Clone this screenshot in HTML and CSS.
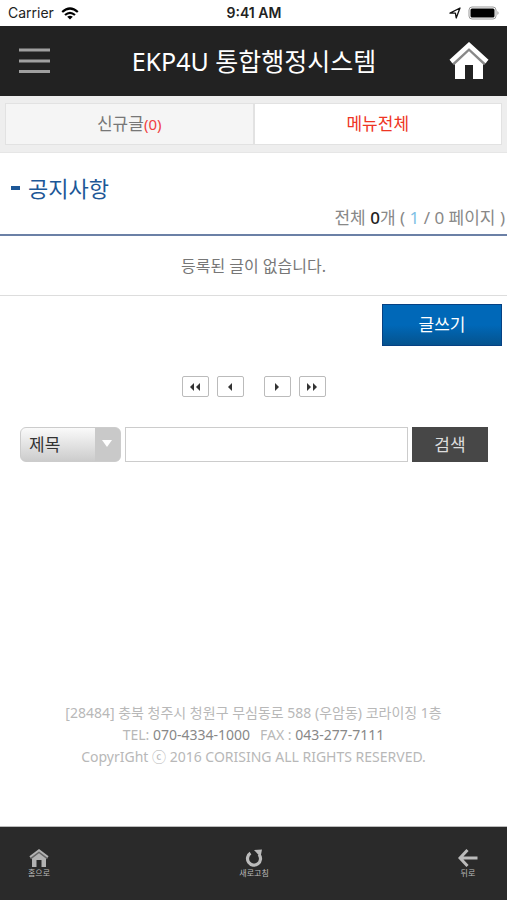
FILE: index.html
```html
<!DOCTYPE html>
<html lang="ko">
<head>
<meta charset="utf-8">
<meta name="viewport" content="width=device-width, initial-scale=1">
<title>EKP4U 통합행정시스템</title>
<link rel="stylesheet" href="styles.css">
</head>
<body>
<div class="status">
  <div class="status-side">
    <span>Carrier</span>
    <svg width="18" height="13" viewBox="0 0 18 13" aria-hidden="true"><g fill="none" stroke="#000" stroke-width="2.2"><path d="M1.2 5Q9-2 16.8 5"/><path d="M4 8Q9 3.600 14 8"/></g><path d="M9 12.500L6.200 9.800Q9 7.800 11.800 9.800Z"/></svg>
  </div>
  <span class="clock">9:41 AM</span>
  <div class="status-side status-end">
    <svg width="12" height="12" viewBox="0 0 12 12" aria-hidden="true"><path d="M1 6.200L11 1L7.200 11L6.400 6.200Z" fill="none" stroke="#111" stroke-width="1.300" stroke-linejoin="round"/></svg>
    <svg width="32" height="14" viewBox="0 0 32 14" aria-hidden="true"><rect x="1" y="1" width="27" height="12" rx="3" fill="#fff" stroke="#999"/><rect x="2.500" y="2.500" width="24" height="9" rx="1.500"/><path d="M29.500 5Q31.500 7 29.500 9Z" fill="#888"/></svg>
  </div>
</div>
<header class="header">
  <button class="icon-btn" type="button" aria-label="메뉴"><svg width="31" height="26" viewBox="0 0 31 26"><path d="M0 2h31M0 13h31M0 23.500h31" stroke="#a0a0a0" stroke-width="3"/></svg></button>
  <h1 class="title">EKP4U 통합행정시스템</h1>
  <a class="icon-btn home" href="#" aria-label="홈"><svg width="40" height="38" viewBox="0 0 40 38"><path d="M6 19L20 6L34 19V37H24V23H16V37H6Z" fill="#fff"/><path d="M3.500 21.500L20 6L36.500 21.500" fill="none" stroke="#888" stroke-width="4.500"/><path d="M2 19.500L20 3L38 19.500" fill="none" stroke="#fff" stroke-width="4.500"/></svg></a>
</header>
<nav class="tabs">
  <a class="tab" href="#">신규글<span class="count">(0)</span></a>
  <a class="tab tab-active" href="#">메뉴전체</a>
</nav>
<main class="main">
  <h2 class="heading"><span class="dash"></span>공지사항</h2>
  <p class="summary">전체 <b class="total">0</b>개 ( <span class="page">1</span> / 0 페이지 )</p>
  <p class="empty">등록된 글이 없습니다.</p>
  <div class="actions"><button class="write" type="button">글쓰기</button></div>
  <div class="pager">
    <button class="page-btn" type="button" aria-label="처음"><svg width="12" height="8" viewBox="0 0 12 8"><path d="M5 0V8L1 4ZM11 0V8L7 4Z"/></svg></button>
    <button class="page-btn page-prev" type="button" aria-label="이전"><svg width="12" height="8" viewBox="0 0 12 8"><path d="M8 0V8L4 4Z"/></svg></button>
    <button class="page-btn" type="button" aria-label="다음"><svg width="12" height="8" viewBox="0 0 12 8"><path d="M4 0V8L8 4Z"/></svg></button>
    <button class="page-btn" type="button" aria-label="마지막"><svg width="12" height="8" viewBox="0 0 12 8"><path d="M1 0V8L5 4ZM7 0V8L11 4Z"/></svg></button>
  </div>
  <form class="search">
    <div class="select-box">
      <select class="select" aria-label="검색 항목"><option>제목</option></select>
      <svg class="arrow" width="10" height="7" viewBox="0 0 10 7" aria-hidden="true"><path d="M0 0H10L5 7Z" fill="#fff"/></svg>
    </div>
    <input class="field" type="text" aria-label="검색어">
    <button class="submit" type="button">검색</button>
  </form>
</main>
<footer class="footer">
  <p>[28484] 충북 청주시 청원구 무심동로 588 (우암동) 코라이징 1층</p>
  <p class="contact"><span>TEL: <a href="tel:070-4334-1000">070-4334-1000</a></span><span>FAX : <a href="tel:043-277-7111">043-277-7111</a></span></p>
  <p>CopyrIGht ⓒ 2016 CORISING ALL RIGHTS RESERVED.</p>
</footer>
<nav class="toolbar">
  <a class="tool" href="#"><svg width="20" height="18" viewBox="0 0 20 18"><path d="M3 8.500L10 3L17 8.500V18H12.500V11H7.500V18H3Z" fill="#b2b2b2"/><path d="M1.500 9.500L10 3L18.500 9.500" fill="none" stroke="#666" stroke-width="2"/><path d="M1 8L10 1.300L19 8" fill="none" stroke="#b2b2b2" stroke-width="2"/></svg>홈으로</a>
  <a class="tool" href="#"><svg width="18" height="18" viewBox="0 0 18 18"><path d="M5.500 4.200A6.500 6.500 0 1 0 14 5.500" fill="none" stroke="#bbb" stroke-width="3.200"/><path d="M9 1L17 .5L15.500 8Z" fill="#bbb"/></svg>새로고침</a>
  <a class="tool" href="#"><svg width="20" height="18" viewBox="0 0 20 18"><path d="M9.500 1L2 9L9.500 17M2.500 9H19.500" fill="none" stroke="#bbb" stroke-width="3"/></svg>뒤로</a>
</nav>
</body>
</html>
```

FILE: styles.css
```css
* { box-sizing: border-box; }

body {
  margin: 0;
  min-height: 100vh;
  display: flex;
  flex-direction: column;
  background: #fff;
  color: #777;
  font: 17px/24px "Noto Sans", "Noto Sans CJK KR", sans-serif;
}

h1, h2, p { margin: 0; font-weight: 400; }
a { color: inherit; text-decoration: none; }
button, input, select { font: inherit; margin: 0; }
button { padding: 0; cursor: pointer; }
svg { display: block; flex: none; }

.status {
  display: grid;
  grid-template-columns: 1fr auto 1fr;
  align-items: center;
  height: 26px;
  padding: 0 7px 0 8px;
  color: #222;
  font: 14px/16px Inter, sans-serif;
}
.status-side { display: flex; align-items: center; gap: 7px; }
.status-end { justify-content: flex-end; }
.clock { font-weight: 600; }

.header {
  display: grid;
  grid-template-columns: 1fr auto 1fr;
  align-items: center;
  height: 70px;
  padding: 0 18px 0 19px;
  background: #222;
}
.icon-btn { display: block; justify-self: start; border: 0; background: none; }
.home { justify-self: end; }
.title { color: #fff; font-size: 25px; line-height: 36px; }

.tabs {
  display: flex;
  padding: 7px 5px;
  background: #eee;
  border-bottom: 1px solid #e6e6e6;
}
.tab {
  flex: 1;
  padding: 8px 0;
  border: 1px solid #e2e2e2;
  background: #f5f5f5;
  text-align: center;
}
.tab-active { background: #fff; color: #ee3524; }
.count { color: #f04040; font-size: 15px; }

.main { flex: 1; }
.heading {
  display: flex;
  align-items: center;
  gap: 8px;
  padding: 20px 11px 3px;
  color: #1d5797;
  font-size: 22px;
  line-height: 30px;
}
.dash { width: 9px; height: 4px; background: #1d5797; }
.summary {
  padding: 0 2px 4px;
  border-bottom: 2px solid #6b80a6;
  text-align: right;
  color: #888;
}
.total { color: #222; font-weight: 500; }
.page { color: #80bfe5; }
.empty {
  padding: 18px 0 17px;
  border-bottom: 1px solid #ddd;
  text-align: center;
  font-size: 16px;
}
.actions { display: flex; justify-content: flex-end; padding: 8px 5px 0; }
.write {
  width: 120px;
  height: 42px;
  border: 1px solid #064183;
  background: linear-gradient(#0068b8 50%, #05538e);
  color: #fff;
}

.pager { display: flex; justify-content: center; gap: 8px; padding: 30px 0; }
.page-btn {
  display: flex;
  align-items: center;
  justify-content: center;
  width: 27px;
  height: 21px;
  border: 1px solid #bbb;
  border-radius: 2px;
  background: #fff;
  color: #333;
}
.page-btn path { fill: #333; }
.page-prev { margin-right: 12px; }

.search { display: flex; gap: 4px; padding: 0 19px 0 20px; }
.select-box { position: relative; }
.select {
  appearance: none;
  display: block;
  width: 101px;
  height: 35px;
  padding: 0 0 0 8px;
  border: 1px solid #ccc;
  border-radius: 6px;
  background: linear-gradient(90deg, transparent 74px, #c9c9c9 74px), linear-gradient(#fafafa, #ccc);
  color: #333;
}
.arrow { position: absolute; right: 9px; top: 13px; pointer-events: none; }
.field { flex: 1; min-width: 0; height: 35px; padding: 0 8px; border: 1px solid #ccc; }
.submit { width: 76px; height: 35px; border: 0; background: #474747; color: #ddd; }

.footer { padding-bottom: 58px; text-align: center; color: #b8b8b8; font-size: 14px; line-height: 22px; }
.contact { display: flex; justify-content: center; gap: 10px; }
.contact a { color: #888; }

.toolbar {
  display: flex;
  justify-content: space-between;
  height: 74px;
  padding: 22px 29px 0 28px;
  border-top: 1px solid #bbb;
  background: #2a2a2a;
  color: #bbb;
  font-size: 8px;
  line-height: 12px;
}
.tool { display: flex; flex-direction: column; align-items: center; }
```
